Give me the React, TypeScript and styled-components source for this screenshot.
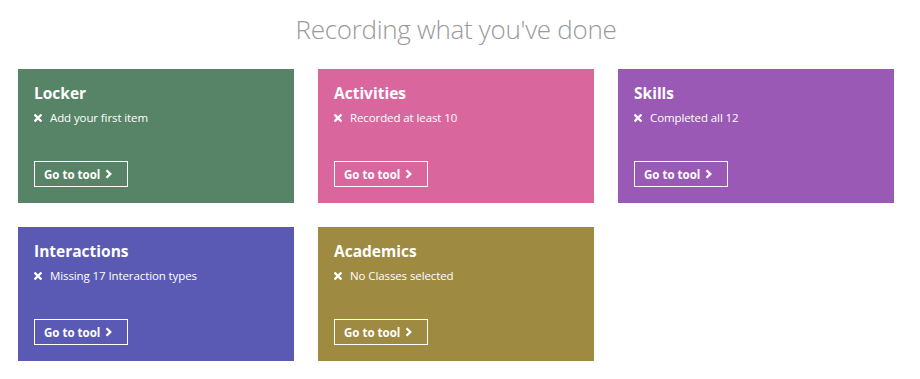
import type { FC } from 'react'
import styled, { createGlobalStyle } from 'styled-components'

const GlobalStyle = createGlobalStyle`
  html,
  body {
    margin: 0;
    padding: 0;
    background: #ffffff;
    font-family: 'Open Sans', 'Noto Sans', sans-serif;
  }
`

type Tool = {
  name: string
  status: string
  color: string
}

const tools: Tool[] = [
  { name: 'Locker', status: 'Add your first item', color: '#578466' },
  { name: 'Activities', status: 'Recorded at least 10', color: '#d9679e' },
  { name: 'Skills', status: 'Completed all 12', color: '#9a59b5' },
  { name: 'Interactions', status: 'Missing 17 Interaction types', color: '#5a5ab4' },
  { name: 'Academics', status: 'No Classes selected', color: '#9e8a40' }
]

const CrossIcon: FC = () => (
  <svg width="8" height="8" viewBox="0 0 8 8" aria-hidden>
    <path d="M1.3 1.3 L6.7 6.7 M6.7 1.3 L1.3 6.7" stroke="#fff" strokeWidth="2.3" strokeLinecap="square" />
  </svg>
)

const ChevronIcon: FC = () => (
  <svg width="7" height="10" viewBox="0 0 7 10" aria-hidden>
    <path d="M1.5 1.2 L5.3 5 L1.5 8.8" stroke="#fff" strokeWidth="2.3" fill="none" />
  </svg>
)

const App: FC = () => {
  return (
    <>
      <GlobalStyle />
      <Page>
        <Heading>Recording what you've done</Heading>
        <Grid>
          {tools.map((tool) => (
            <Card key={tool.name} $color={tool.color}>
              <CardTitle>{tool.name}</CardTitle>
              <Status>
                <CrossIcon />
                <span>{tool.status}</span>
              </Status>
              <ToolButton href="#">
                Go to tool
                <ChevronIcon />
              </ToolButton>
            </Card>
          ))}
        </Grid>
      </Page>
    </>
  )
}

const Page = styled.div`
  width: 876px;
  margin-left: 18px;
  padding-top: 13px;
`

const Heading = styled.h1`
  margin: 0 0 24px;
  text-align: center;
  font-size: 26px;
  line-height: 32px;
  font-weight: 300;
  letter-spacing: -0.3px;
  color: #9a9a9a;
`

const Grid = styled.div`
  display: grid;
  grid-template-columns: repeat(3, 276px);
  column-gap: 24px;
  row-gap: 24px;
`

const Card = styled.div<{ $color: string }>`
  display: flex;
  flex-direction: column;
  align-items: flex-start;
  box-sizing: border-box;
  height: 134px;
  padding: 14px 16px 16px;
  background: ${({ $color }) => $color};
  color: #ffffff;
`

const CardTitle = styled.h2`
  margin: 0 0 6px;
  font-size: 15.5px;
  line-height: 20px;
  font-weight: 700;
`

const Status = styled.div`
  display: flex;
  align-items: center;
  gap: 8px;
  font-size: 11.5px;
  line-height: 18px;
  letter-spacing: -0.1px;
`

const ToolButton = styled.a`
  display: flex;
  align-items: center;
  gap: 5px;
  box-sizing: border-box;
  height: 26px;
  margin-top: auto;
  padding: 0 15px 0 9px;
  border: 1px solid #ffffff;
  color: #ffffff;
  text-decoration: none;
  font-size: 11.5px;
  font-weight: 700;
`

export default App
